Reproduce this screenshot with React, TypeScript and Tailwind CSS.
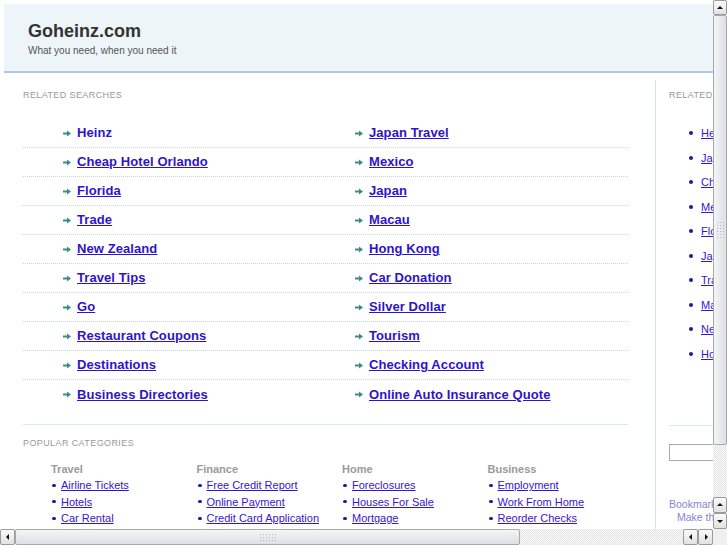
import React from 'react'

const leftLinks = [
  'Heinz',
  'Cheap Hotel Orlando',
  'Florida',
  'Trade',
  'New Zealand',
  'Travel Tips',
  'Go',
  'Restaurant Coupons',
  'Destinations',
  'Business Directories',
]

const rightLinks = [
  'Japan Travel',
  'Mexico',
  'Japan',
  'Macau',
  'Hong Kong',
  'Car Donation',
  'Silver Dollar',
  'Tourism',
  'Checking Account',
  'Online Auto Insurance Quote',
]

const sideLinks = [
  'Heinz',
  'Japan Travel',
  'Cheap Hotel Orlando',
  'Mexico',
  'Florida',
  'Japan',
  'Trade',
  'Macau',
  'New Zealand',
  'Hong Kong',
]

const categories = [
  { title: 'Travel', items: ['Airline Tickets', 'Hotels', 'Car Rental'] },
  { title: 'Finance', items: ['Free Credit Report', 'Online Payment', 'Credit Card Application'] },
  { title: 'Home', items: ['Foreclosures', 'Houses For Sale', 'Mortgage'] },
  { title: 'Business', items: ['Employment', 'Work From Home', 'Reorder Checks'] },
]

function Arrow() {
  return (
    <svg width="8" height="7" viewBox="0 0 8 7" className="shrink-0">
      <path d="M0 2.6h4V0.6L8 3.5 4 6.4V4.4H0z" fill="#3b8c84" />
    </svg>
  )
}

function SearchLink({ label, first }: { label: string; first?: boolean }) {
  return (
    <div className="flex items-center gap-[6px]">
      <Arrow />
      <a
        href="#"
        className={`text-[13px] font-bold tracking-[0.08px] text-[#2d14cc] ${first ? 'no-underline' : 'underline'}`}
      >
        {label}
      </a>
    </div>
  )
}

function Triangle({ dir }: { dir: 'up' | 'down' | 'left' | 'right' }) {
  const d = {
    up: 'M1 5L4 2 7 5z',
    down: 'M1 3L4 6 7 3z',
    left: 'M5 1L2 4 5 7z',
    right: 'M3 1L6 4 3 7z',
  }[dir]
  return (
    <svg width="8" height="8" viewBox="0 0 8 8">
      <path d={d} fill="#111" />
    </svg>
  )
}

function ScrollButton({ dir, className }: { dir: 'up' | 'down' | 'left' | 'right'; className: string }) {
  return (
    <div
      className={`flex items-center justify-center border border-[#9b9b9b] rounded-[2px] bg-gradient-to-b from-[#fafafa] to-[#e2e2e2] ${className}`}
    >
      <Triangle dir={dir} />
    </div>
  )
}

function Grip({ vertical }: { vertical?: boolean }) {
  return (
    <div className={`grid gap-[2px] ${vertical ? 'grid-cols-3' : 'grid-cols-6'}`}>
      {Array.from({ length: 18 }).map((_, i) => (
        <span key={i} className="w-[1px] h-[1px] bg-[#b8b8b8]" />
      ))}
    </div>
  )
}

const track =
  'bg-[repeating-conic-gradient(#e6e6e6_0_25%,#f7f7f7_0_50%)] bg-[length:2px_2px]'

function VScrollbar() {
  return (
    <div className={`w-[14px] shrink-0 flex flex-col ${track}`}>
      <ScrollButton dir="up" className="h-[15px]" />
      <div className="h-[430px] flex items-center justify-center border border-[#a9a9a9] rounded-[2px] bg-gradient-to-r from-[#f3f5f7] to-[#dde0e4]">
        <Grip vertical />
      </div>
      <div className="flex-1" />
      <ScrollButton dir="up" className="h-[16px]" />
      <ScrollButton dir="down" className="h-[16px]" />
    </div>
  )
}

function HScrollbar() {
  return (
    <div className="h-[16px] shrink-0 flex">
      <div className={`flex-1 flex ${track}`}>
        <ScrollButton dir="left" className="w-[15px]" />
        <div className="w-[505px] flex items-center justify-center border border-[#a9a9a9] rounded-[2px] bg-gradient-to-b from-[#f3f5f7] to-[#dde0e4]">
          <Grip />
        </div>
        <div className="flex-1" />
        <ScrollButton dir="left" className="w-[15px]" />
        <ScrollButton dir="right" className="w-[15px]" />
      </div>
      <div className="w-[14px] bg-[#f0f0f0]" />
    </div>
  )
}

export default function App() {
  return (
    <div className="w-[727px] h-[545px] flex flex-col overflow-hidden bg-white font-['Liberation_Sans',Arial,sans-serif]">
      <div className="flex flex-1 min-h-0">
        <div className="flex-1 overflow-hidden">
          <div className="w-[820px] pt-[4px]">
            {/* header */}
            <div className="ml-[4px] h-[69px] bg-[#eef5f8] border-b-2 border-[#b3c6e8] pl-[24px] pt-[16px]">
              <div className="text-[18px] font-bold leading-[22px] text-[#333]">Goheinz.com</div>
              <div className="text-[10px] leading-[13px] mt-[2px] text-[#555]">What you need, when you need it</div>
            </div>

            <div className="flex pl-[23px]">
              {/* main column */}
              <div className="w-[605px] shrink-0 pt-[16px]">
                <div className="text-[9px] leading-[12px] tracking-[0.4px] text-[#999]">RELATED SEARCHES</div>
                <div className="mt-[18px]">
                  {leftLinks.map((l, i) => (
                    <div
                      key={l}
                      className={`h-[29px] flex items-center pl-[40px] ${
                        i < leftLinks.length - 1 ? 'border-b border-dotted border-[#c6d4ea]' : ''
                      }`}
                    >
                      <div className="w-[292px] shrink-0">
                        <SearchLink label={l} first={i === 0} />
                      </div>
                      <SearchLink label={rightLinks[i]} />
                    </div>
                  ))}
                </div>
                <div className="mt-[15px] border-t border-[#dde7f3]" />
                <div className="mt-[12px] text-[9px] leading-[12px] tracking-[0.4px] text-[#999]">POPULAR CATEGORIES</div>
                <div className="mt-[13px] pl-[28px] flex">
                  {categories.map((c) => (
                    <div key={c.title} className="w-[145.5px] shrink-0">
                      <div className="text-[11px] font-bold leading-[14px] text-[#9a9a9a]">{c.title}</div>
                      <ul className="mt-[1px]">
                        {c.items.map((it) => (
                          <li key={it} className="flex items-center h-[16.5px]">
                            <span className="w-[4px] h-[3px] rounded-full bg-[#1c1c9c] ml-[1px] mr-[5px]" />
                            <a href="#" className="text-[11px] text-[#3316d4] underline">
                              {it}
                            </a>
                          </li>
                        ))}
                      </ul>
                    </div>
                  ))}
                </div>
              </div>

              {/* sidebar */}
              <div className="ml-[27px] mt-[7px] w-[160px] shrink-0 border-l border-[#d5e0f0] pl-[13px] pt-[9px] h-[470px]">
                <div className="text-[9px] leading-[12px] tracking-[0.4px] text-[#999]">RELATED SEARCHES</div>
                <ul className="mt-[20px] pl-[20px]">
                  {sideLinks.map((s) => (
                    <li key={s} className="flex items-center h-[24.5px]">
                      <span className="w-[4px] h-[4px] rounded-full bg-[#1c1c9c] mr-[8px]" />
                      <a href="#" className="text-[11px] text-[#3316d4] underline">
                        {s}
                      </a>
                    </li>
                  ))}
                </ul>
                <div className="mt-[59px] border-t border-[#dde7f3]" />
                <div className="mt-[18px] h-[17px] w-[140px] border border-[#aaa]" />
                <div className="mt-[37px] text-[10.5px] leading-[13px] text-[#8585d6]">Bookmark this page</div>
                <div className="pl-[8px] text-[10.5px] leading-[13px] text-[#8585d6]">Make this your homepage</div>
              </div>
            </div>
          </div>
        </div>
        <VScrollbar />
      </div>
      <HScrollbar />
    </div>
  )
}
